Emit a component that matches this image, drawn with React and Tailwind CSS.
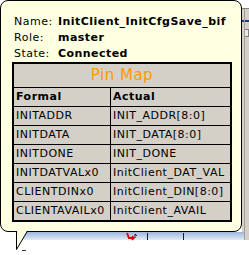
import React from "react";

const rows = [
  ["INITADDR", "INIT_ADDR[8:0]"],
  ["INITDATA", "INIT_DATA[8:0]"],
  ["INITDONE", "INIT_DONE"],
  ["INITDATVALx0", "InitClient_DAT_VAL"],
  ["CLIENTDINx0", "InitClient_DIN[8:0]"],
  ["CLIENTAVAILx0", "InitClient_AVAIL"],
];

export default function App() {
  return (
    <div
      className="relative w-[249px] h-[255px] bg-white overflow-hidden"
      style={{ fontFamily: '"DejaVu Sans", Verdana, sans-serif' }}
    >
      {/* background window pieces behind tooltip */}
      <div className="absolute left-[242px] top-[8px] w-[7px] h-[232px] bg-[#d4d0c8] border-t border-[#808080]">
        <div className="absolute left-0 top-[11px] w-full h-[2px] bg-[#1c3f7a]" />
        <div className="absolute left-[2px] top-[20px] w-[5px] h-[8px] border border-[#808080] bg-[#ece9e0]" />
        <div className="absolute left-[2px] top-0 w-px h-full bg-[#a0a0a0]" />
      </div>
      <div className="absolute left-[18px] top-[232px] w-[226px] h-[8px] bg-gradient-to-b from-[#9db6db] to-[#e4ecf6]" />
      <div className="absolute left-[147px] top-[233px] w-px h-[7px] bg-[#1a1a40]" />
      <div className="absolute left-[183px] top-[233px] w-px h-[7px] bg-[#1a1a40]" />
      <svg className="absolute left-[126px] top-[232px]" width="12" height="9" viewBox="0 0 12 9">
        <path d="M1 1 L3 6 L7 6" stroke="#e00000" strokeWidth="2" fill="none" />
        <path d="M6 4 L8 6 L6 8" stroke="#e00000" strokeWidth="1.5" fill="none" />
        <path d="M9 2 L9 6 M9 2 L11 4" stroke="#222" strokeWidth="1" fill="none" />
      </svg>
      <div className="absolute left-[22px] top-[250px] w-[4px] h-px bg-[#333]" />

      {/* tooltip bubble */}
      <div className="absolute left-0 top-0 w-[242px] h-[232px] bg-[#ffffe1] border border-black rounded-[8px] pl-[13px] pt-[13px]">
        <div className="text-[11px] leading-[16px] tracking-[0.5px] text-black">
          <div className="flex">
            <span className="w-[44px]">Name:</span>
            <span className="font-bold tracking-[0.45px]">InitClient_InitCfgSave_bif</span>
          </div>
          <div className="flex">
            <span className="w-[44px]">Role:</span>
            <span className="font-bold tracking-[0.45px]">master</span>
          </div>
          <div className="flex">
            <span className="w-[44px]">State:</span>
            <span className="font-bold tracking-[0.45px]">Connected</span>
          </div>
        </div>

        <div className="-ml-[2px] w-[220px] border-2 border-black bg-[#d4d0c8] text-[11px] tracking-[0.5px] text-black">
          <div className="h-[23px] flex items-center justify-center text-[15px] text-[#ff9900]">
            Pin Map
          </div>
          <div className="flex h-[19px] border-t border-black font-bold">
            <div className="w-[97px] border-r border-black pl-[2px] flex items-center">Formal</div>
            <div className="flex-1 pl-[2px] flex items-center">Actual</div>
          </div>
          {rows.map(([f, a]) => (
            <div key={f} className="flex h-[19px] border-t border-black">
              <div className="w-[97px] border-r border-black pl-[2px] flex items-center whitespace-nowrap">{f}</div>
              <div className="flex-1 pl-[2px] flex items-center whitespace-nowrap">{a}</div>
            </div>
          ))}
        </div>
      </div>

      {/* tail */}
      <svg className="absolute left-[15px] top-[230px]" width="14" height="21" viewBox="0 0 14 21">
        <polygon points="1,0 1,19 12,1 12,0" fill="#ffffe1" />
        <path d="M1.5 1 L1.5 19.5 L12.5 1" stroke="black" strokeWidth="1" fill="none" />
      </svg>
    </div>
  );
}
